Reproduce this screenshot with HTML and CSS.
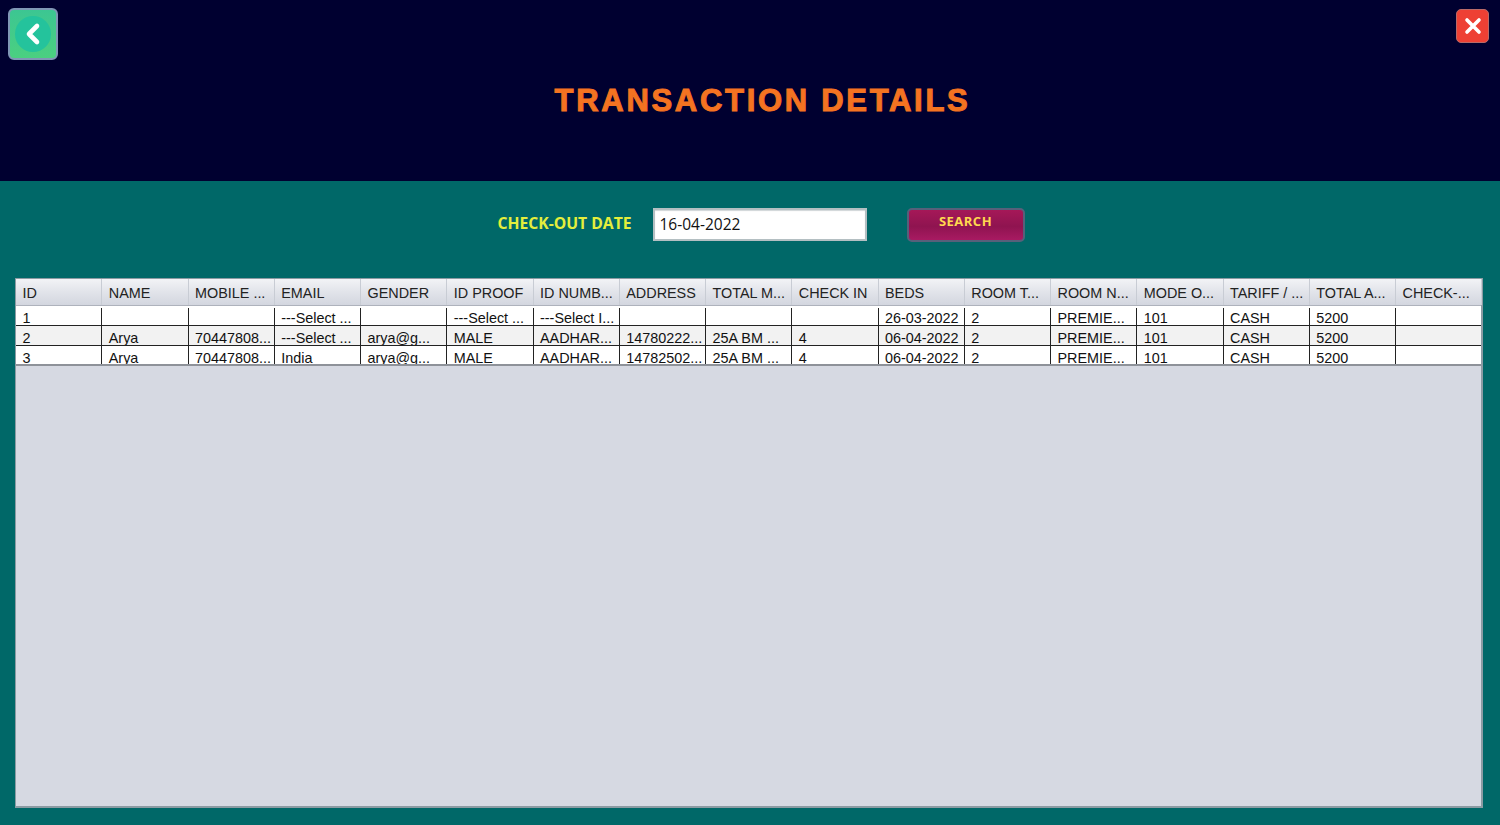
FILE: index.html
```html
<!DOCTYPE html>
<html lang="en">
<head>
  <meta charset="UTF-8" />
  <title>Transaction Details</title>
  <link rel="stylesheet" href="styles.css">
</head>
<body>
  <header class="top">
    <button class="back" type="button" aria-label="Back">
      <span class="back-circle">
        <svg width="18" height="24" viewBox="0 0 18 24"><path d="M13 4 L5 12 L13 20" fill="none" stroke="#fff" stroke-width="4.6" stroke-linecap="round" stroke-linejoin="round"/></svg>
      </span>
    </button>
    <h1>TRANSACTION DETAILS</h1>
    <button class="close" type="button" aria-label="Close">
      <svg width="20" height="20" viewBox="0 0 20 20"><path d="M4 4 L16 16 M16 4 L4 16" fill="none" stroke="#fff" stroke-width="3.6" stroke-linecap="round"/></svg>
    </button>
  </header>

  <main class="content">
    <form class="search-row">
      <label for="fecha">CHECK-OUT DATE</label>
      <input type="text" id="fecha" value="16-04-2022" />
      <button type="button" class="search">SEARCH</button>
    </form>

    <div class="panel">
      <div class="table-head">
        <span>ID</span><span>NAME</span><span>MOBILE ...</span><span>EMAIL</span><span>GENDER</span><span>ID PROOF</span><span>ID NUMB...</span><span>ADDRESS</span><span>TOTAL M...</span><span>CHECK IN</span><span>BEDS</span><span>ROOM T...</span><span>ROOM N...</span><span>MODE O...</span><span>TARIFF / ...</span><span>TOTAL A...</span><span>CHECK-...</span>
      </div>
      <div class="table-body">
        <div class="row first">
          <span>1</span><span></span><span></span><span>---Select ...</span><span></span><span>---Select ...</span><span>---Select I...</span><span></span><span></span><span></span><span>26-03-2022</span><span>2</span><span>PREMIE...</span><span>101</span><span>CASH</span><span>5200</span><span></span>
        </div>
        <div class="row alt">
          <span>2</span><span>Arya</span><span>70447808...</span><span>---Select ...</span><span>arya@g...</span><span>MALE</span><span>AADHAR...</span><span>14780222...</span><span>25A BM ...</span><span>4</span><span>06-04-2022</span><span>2</span><span>PREMIE...</span><span>101</span><span>CASH</span><span>5200</span><span></span>
        </div>
        <div class="row">
          <span>3</span><span>Arya</span><span>70447808...</span><span>India</span><span>arya@g...</span><span>MALE</span><span>AADHAR...</span><span>14782502...</span><span>25A BM ...</span><span>4</span><span>06-04-2022</span><span>2</span><span>PREMIE...</span><span>101</span><span>CASH</span><span>5200</span><span></span>
        </div>
      </div>
    </div>
  </main>
</body>
</html>
```
FILE: styles.css
```css
* { box-sizing: border-box; }

html, body { height: 100%; }

body {
  margin: 0;
  background: #006868;
  font-family: "Liberation Sans", Arial, sans-serif;
  overflow: hidden;
}

.top {
  height: 181px;
  background: #000030;
  display: flex;
  align-items: flex-start;
  padding: 8px 11px 0 8px;
}

.top h1 {
  flex: 1;
  margin: 75px 0 0;
  padding-left: 11px;
  text-align: center;
  font-size: 31px;
  line-height: 36px;
  font-weight: bold;
  letter-spacing: 2.7px;
  color: #f47321;
  -webkit-text-stroke: 1px #f47321;
}

.back {
  width: 50px;
  height: 52px;
  padding: 0;
  border: 2px solid #7f97b5;
  border-radius: 6px;
  background: linear-gradient(#3cc692, #4bd080);
  display: flex;
  align-items: center;
  justify-content: center;
}

.back-circle {
  width: 36px;
  height: 36px;
  border-radius: 50%;
  background: #24c39c;
  display: flex;
  align-items: center;
  justify-content: center;
}

.close {
  width: 33px;
  height: 34px;
  margin-top: 1px;
  padding: 0;
  border: 1px solid #b86a68;
  border-radius: 5px;
  background: #ee4034;
  display: flex;
  align-items: center;
  justify-content: center;
}

.content {
  padding: 27px 17px 0 15px;
}

.search-row {
  display: flex;
  align-items: flex-start;
  justify-content: center;
  padding-left: 24px;
  margin-bottom: 36px;
}

.search-row label {
  width: 155px;
  font-family: "Open Sans", sans-serif;
  font-weight: bold;
  font-size: 15.7px;
  line-height: 30px;
  color: #e4ee3c;
  white-space: nowrap;
}

.search-row input {
  width: 214px;
  height: 33px;
  padding: 0 5px 2px;
  border: 2px solid #b4bfc2;
  box-shadow: inset 0 1px 1px #d0d5d8;
  background: #fff;
  font-family: "Open Sans", sans-serif;
  font-size: 15.5px;
  color: #111;
}

.search {
  width: 118px;
  height: 34px;
  margin-left: 40px;
  padding: 0 0 8px;
  border: 2px solid #56607a;
  border-radius: 5px;
  background: linear-gradient(#a51858, #8f1450 55%, #a81a62);
  font-family: "Open Sans", sans-serif;
  font-weight: bold;
  font-size: 13px;
  letter-spacing: 0.5px;
  color: #ffd84f;
}

.panel {
  height: 530px;
  background: #d6d9e2;
  border: 1px solid #8b9ba3;
  border-width: 1px 2px 2px 1px;
  font-size: 14.4px;
  color: #111;
}

.table-head, .row {
  display: grid;
  grid-template-columns: repeat(17, 86.25px);
}

.table-head {
  height: 27px;
  background: linear-gradient(#f2f3f6, #e3e5eb 45%, #d3d6df);
  border-bottom: 1px solid #aeb2bc;
  color: #222;
}

.table-head span {
  padding: 5px 0 0 6.5px;
  line-height: 18px;
  border-right: 1px solid #c8ccd4;
  white-space: nowrap;
  overflow: hidden;
}

.table-body {
  height: 60px;
  padding-top: 2px;
  background: #fff;
  border-bottom: 2px solid #8e9299;
  overflow: hidden;
}

.row {
  height: 20px;
  background: #fff;
  border-bottom: 1px solid #222;
}

.row.first { height: 18px; }
.row.alt { background: #f2f2f2; }

.row span {
  padding: 3px 0 0 6.5px;
  line-height: 18px;
  border-right: 1px solid #222;
  white-space: nowrap;
  overflow: hidden;
}

.row.first span { padding-top: 1px; }
```
